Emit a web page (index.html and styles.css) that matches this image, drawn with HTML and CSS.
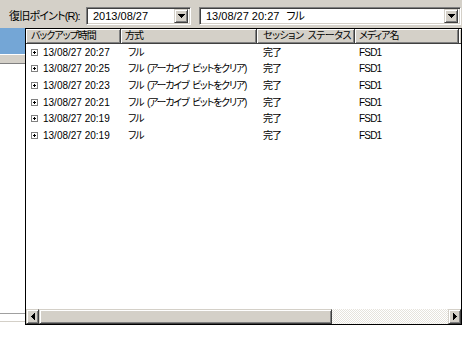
FILE: index.html
```
<!DOCTYPE html>
<html lang="ja">
<head>
<meta charset="utf-8">
<title>復旧ポイント</title>
<link rel="stylesheet" href="styles.css">
</head>
<body>
<div class="top">
  <span class="label">復旧ポイント(R):</span>
  <div class="combo combo-date">
    <span class="val">2013/08/27</span>
    <span class="dd"><svg width="7" height="4" viewBox="0 0 7 4" shape-rendering="crispEdges"><path d="M0 0h7v1H0z M1 1h5v1H1z M2 2h3v1H2z M3 3h1v1H3z" fill="#000"/></svg></span>
  </div>
  <div class="combo combo-point">
    <span class="val">13/08/27 20:27<span class="gap">フル</span></span>
    <span class="dd"><svg width="7" height="4" viewBox="0 0 7 4" shape-rendering="crispEdges"><path d="M0 0h7v1H0z M1 1h5v1H1z M2 2h3v1H2z M3 3h1v1H3z" fill="#000"/></svg></span>
  </div>
</div>
<div class="main">
  <div class="side">
    <div class="sel"></div>
    <div class="band"></div>
    <div class="fill"></div>
    <div class="edge"></div>
  </div>
  <div class="list">
    <div class="header">
      <div class="hc w1">バックアップ時間</div>
      <div class="hc w2">方式</div>
      <div class="hc w3">セッション ステータス</div>
      <div class="hc w4">メディア名</div>
      <div class="hfill"></div>
    </div>
    <div class="rows">
      <div class="row"><div class="c c1"><svg class="exp" width="7" height="7" viewBox="0 0 7 7" shape-rendering="crispEdges"><rect x="0.5" y="0.5" width="6" height="6" fill="#fff" stroke="#808080"/><path d="M2 3h3v1H2z M3 2h1v3H3z" fill="#000"/></svg>13/08/27 20:27</div><div class="c c2">フル</div><div class="c c3">完了</div><div class="c c4">FSD1</div></div>
      <div class="row"><div class="c c1"><svg class="exp" width="7" height="7" viewBox="0 0 7 7" shape-rendering="crispEdges"><rect x="0.5" y="0.5" width="6" height="6" fill="#fff" stroke="#808080"/><path d="M2 3h3v1H2z M3 2h1v3H3z" fill="#000"/></svg>13/08/27 20:25</div><div class="c c2">フル (アーカイブ ビットをクリア)</div><div class="c c3">完了</div><div class="c c4">FSD1</div></div>
      <div class="row"><div class="c c1"><svg class="exp" width="7" height="7" viewBox="0 0 7 7" shape-rendering="crispEdges"><rect x="0.5" y="0.5" width="6" height="6" fill="#fff" stroke="#808080"/><path d="M2 3h3v1H2z M3 2h1v3H3z" fill="#000"/></svg>13/08/27 20:23</div><div class="c c2">フル (アーカイブ ビットをクリア)</div><div class="c c3">完了</div><div class="c c4">FSD1</div></div>
      <div class="row"><div class="c c1"><svg class="exp" width="7" height="7" viewBox="0 0 7 7" shape-rendering="crispEdges"><rect x="0.5" y="0.5" width="6" height="6" fill="#fff" stroke="#808080"/><path d="M2 3h3v1H2z M3 2h1v3H3z" fill="#000"/></svg>13/08/27 20:21</div><div class="c c2">フル (アーカイブ ビットをクリア)</div><div class="c c3">完了</div><div class="c c4">FSD1</div></div>
      <div class="row"><div class="c c1"><svg class="exp" width="7" height="7" viewBox="0 0 7 7" shape-rendering="crispEdges"><rect x="0.5" y="0.5" width="6" height="6" fill="#fff" stroke="#808080"/><path d="M2 3h3v1H2z M3 2h1v3H3z" fill="#000"/></svg>13/08/27 20:19</div><div class="c c2">フル</div><div class="c c3">完了</div><div class="c c4">FSD1</div></div>
      <div class="row"><div class="c c1"><svg class="exp" width="7" height="7" viewBox="0 0 7 7" shape-rendering="crispEdges"><rect x="0.5" y="0.5" width="6" height="6" fill="#fff" stroke="#808080"/><path d="M2 3h3v1H2z M3 2h1v3H3z" fill="#000"/></svg>13/08/27 20:19</div><div class="c c2">フル</div><div class="c c3">完了</div><div class="c c4">FSD1</div></div>
    </div>
    <div class="hscroll">
      <div class="sbtn"><svg width="4" height="7" viewBox="0 0 4 7" shape-rendering="crispEdges"><path d="M3 0h1v7H3z M2 1h1v5H2z M1 2h1v3H1z M0 3h1v1H0z" fill="#000"/></svg></div>
      <div class="thumb"></div>
      <div class="track"></div>
      <div class="sbtn"><svg width="4" height="7" viewBox="0 0 4 7" shape-rendering="crispEdges"><path d="M0 0h1v7H0z M1 1h1v5H1z M2 2h1v3H2z M3 3h1v1H3z" fill="#000"/></svg></div>
    </div>
  </div>
</div>
</body>
</html>
```
FILE: styles.css
```
* { box-sizing: border-box; }
html, body { margin: 0; padding: 0; }
body {
  width: 462px;
  height: 341px;
  overflow: hidden;
  background: #fff;
  color: #000;
  font-family: "Liberation Sans", "Noto Sans CJK JP", sans-serif;
  font-size: 10px;
  font-feature-settings: "palt" 1;
}

/* top bar */
.top {
  height: 28px;
  background: #d4d0c8;
  display: flex;
  align-items: flex-start;
  padding: 7px 0 0 9px;
}
.label {
  width: 77px;
  font-size: 11px;
  line-height: 18px;
  letter-spacing: -0.8px;
  white-space: nowrap;
}
.combo {
  height: 18px;
  background: #fff;
  display: flex;
  align-items: center;
  justify-content: space-between;
  border: 1px solid;
  border-color: #808080 #fff #fff #808080;
  box-shadow: inset 1px 1px #404040, inset -1px -1px #d4d0c8;
  padding: 2px;
  font-size: 11px;
}
.combo-date { width: 105px; }
.combo-point { width: 262px; margin-left: 8px; }
.val {
  padding-left: 4px;
  line-height: 13px;
  white-space: nowrap;
}
.gap { margin-left: 7px; letter-spacing: -1px; }
.dd {
  width: 14px;
  height: 14px;
  flex: none;
  background: #d4d0c8;
  border: 1px solid;
  border-color: #d4d0c8 #404040 #404040 #d4d0c8;
  box-shadow: inset 1px 1px #fff, inset -1px -1px #808080;
  display: flex;
  align-items: center;
  justify-content: center;
}
.dd svg { display: block; }

/* main */
.main {
  display: flex;
  align-items: flex-start;
  height: 313px;
}
.side {
  width: 25px;
  height: 313px;
  display: flex;
  flex-direction: column;
}
.sel { height: 26px; background: #74a6d6; }
.band {
  height: 10px;
  background: #d4d0c8;
  border-top: 1px solid #fff;
  border-bottom: 1px solid #808080;
}
.fill { flex: 1; }
.edge {
  height: 9px;
  border-top: 1px solid #a0a0a0;
  border-bottom: 1px solid #d4d0c8;
  margin-bottom: 19px;
}

.list {
  width: 437px;
  height: 297px;
  border: 1px solid #000;
  background: #fff;
  display: flex;
  flex-direction: column;
}
.header {
  display: flex;
  height: 15px;
  background: #d4d0c8;
  flex: none;
}
.hc {
  height: 15px;
  line-height: 13px;
  padding-left: 5px;
  white-space: nowrap;
  overflow: hidden;
  letter-spacing: -1px;
  border-right: 1px solid #404040;
  border-bottom: 1px solid #404040;
  box-shadow: inset 1px 1px #fff, inset -1px -1px #808080;
}
.w1 { width: 95px; }
.w2 { width: 136px; padding-left: 4px; }
.w3 { width: 98px; padding-left: 6px; letter-spacing: -0.5px; word-spacing: 2px; }
.w4 { width: 104px; padding-left: 4px; }
.hfill {
  flex: 1;
  box-shadow: inset 1px 1px #fff;
  border-bottom: 1px solid #404040;
}

.rows { flex: 1; }
.row {
  display: grid;
  grid-template-columns: 95px 136px 98px 104px;
  height: 16.67px;
  align-items: center;
}
.c {
  line-height: 13px;
  white-space: nowrap;
  overflow: hidden;
}
.c1 { padding-left: 5px; display: flex; align-items: center; }
.c2 { padding-left: 7px; letter-spacing: -1.2px; word-spacing: 2px; }
.c3 { padding-left: 6px; letter-spacing: -1px; }
.c4 { padding-left: 4px; letter-spacing: -0.8px; }
.exp { display: block; margin-right: 5px; flex: none; }

.hscroll {
  display: flex;
  height: 15px;
  flex: none;
}
.sbtn, .thumb {
  background: #d4d0c8;
  border: 1px solid;
  border-color: #d4d0c8 #404040 #404040 #d4d0c8;
  box-shadow: inset 1px 1px #fff, inset -1px -1px #808080;
}
.sbtn {
  width: 13px;
  display: flex;
  align-items: center;
  justify-content: center;
}
.sbtn svg { display: block; }
.thumb { width: 293px; }
.track {
  flex: 1;
  background: repeating-conic-gradient(#e6e3dc 0 25%, #fff 0 50%) 0 0 / 2px 2px;
}
```
